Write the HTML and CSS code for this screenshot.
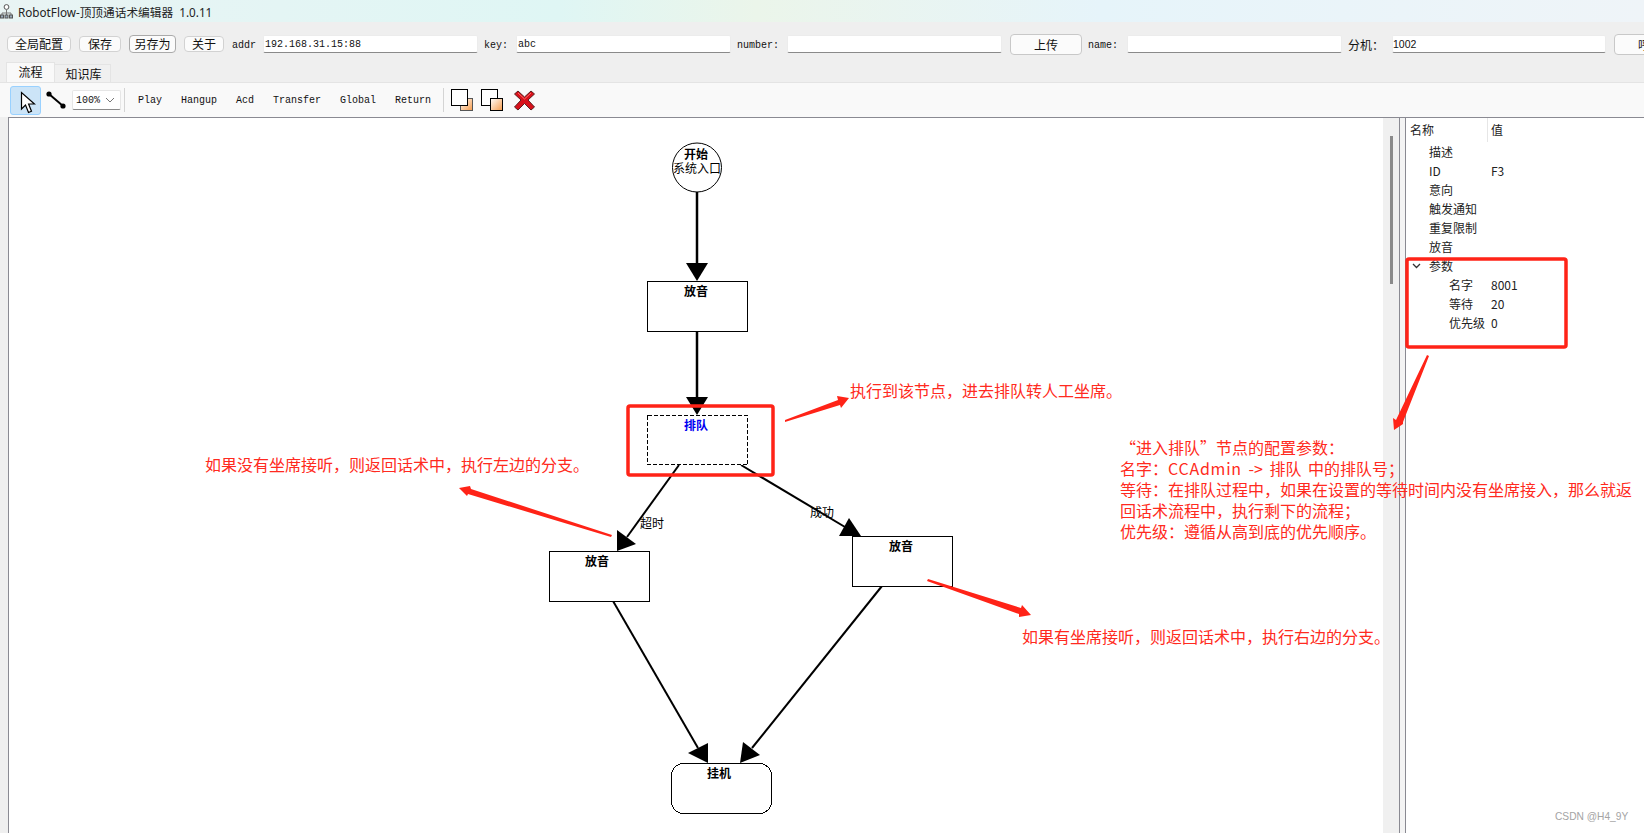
FILE: index.html
```html
<!DOCTYPE html>
<html lang="zh">
<head>
  <meta charset="UTF-8" />
  <title>RobotFlow-顶顶通话术编辑器 1.0.11</title>
  <link rel="stylesheet" href="styles.css">
</head>
<body>
  <div class="titlebar">
    <svg class="app-icon" width="13" height="15" viewBox="0 0 13 15">
      <circle cx="6.5" cy="3" r="2.4" fill="#fff" stroke="#555"/>
      <path d="M6.5 5.5V9M2 11V9H11V11M6.5 9V11" fill="none" stroke="#777"/>
      <rect x="0.5" y="11" width="3" height="3" fill="#9ab" stroke="#555"/>
      <rect x="5" y="11" width="3" height="3" fill="#9ab" stroke="#555"/>
      <rect x="9.5" y="11" width="3" height="3" fill="#9ab" stroke="#555"/>
    </svg>
    <span>RobotFlow-顶顶通话术编辑器&nbsp; 1.0.11</span>
  </div>

  <div class="topbar">
    <button class="btn w64">全局配置</button>
    <button class="btn w42">保存</button>
    <button class="btn btn-focus w47">另存为</button>
    <button class="btn w40">关于</button>
    <span class="lbl w31">addr</span>
    <input class="field" value="192.168.31.15:88">
    <span class="lbl w30">key:</span>
    <input class="field" value="abc">
    <span class="lbl w48">number:</span>
    <input class="field">
    <button class="btn btn-big">上传</button>
    <span class="lbl w37">name:</span>
    <input class="field">
    <span class="lbl-cn">分机：</span>
    <input class="field field-sans" value="1002">
    <button class="btn btn-big">呼叫</button>
  </div>

  <div class="tabs">
    <div class="tab active">流程</div>
    <div class="tab">知识库</div>
  </div>

  <div class="tools">
    <div class="tool-select">
      <svg width="16" height="23" viewBox="0 0 16 23">
        <path d="M1.5 1.5V18L5.5 14L8.5 21.5L11.5 20.2L8.6 13H14.5Z" fill="#fff" stroke="#000" stroke-width="1.2"/>
      </svg>
    </div>
    <svg class="tool-link" width="20" height="18" viewBox="0 0 20 18">
      <path d="M3 3L17 15" stroke="#000" stroke-width="2"/>
      <circle cx="3" cy="3" r="2.6"/>
      <circle cx="17" cy="15" r="2.6"/>
    </svg>
    <div class="combo">
      <span>100%</span>
      <svg width="10" height="6" viewBox="0 0 10 6"><path d="M1 1L5 5L9 1" fill="none" stroke="#777"/></svg>
    </div>
    <div class="sep"></div>
    <div class="tool-words">
      <span>Play</span>
      <span>Hangup</span>
      <span>Acd</span>
      <span>Transfer</span>
      <span>Global</span>
      <span>Return</span>
    </div>
    <div class="sep sep-two"></div>
    <svg class="layer-icon" width="22" height="22" viewBox="0 0 22 22">
      <defs>
        <linearGradient id="orange" x1="0" y1="0" x2="1" y2="1">
          <stop offset="0" stop-color="#fff"/>
          <stop offset="1" stop-color="#f59a4a"/>
        </linearGradient>
      </defs>
      <rect x="9.5" y="9.5" width="12" height="12" fill="url(#orange)" stroke="#555"/>
      <rect x="0.5" y="0.5" width="16" height="16" fill="#fff" stroke="#000"/>
    </svg>
    <svg class="layer-icon" width="22" height="22" viewBox="0 0 22 22">
      <rect x="0.5" y="0.5" width="16" height="16" fill="#fff" stroke="#000"/>
      <rect x="9.5" y="9.5" width="12" height="12" fill="url(#orange)" stroke="#000"/>
    </svg>
    <svg class="del-icon" width="21" height="22" viewBox="0 0 21 22">
      <path d="M4 2L10.5 8L17 2L20.5 5L14 11L20.5 18L17 21L10.5 14.500L4 21L0.500 18L7 11L0.500 5Z" fill="#d8101a" stroke="#5a2020"/>
      <path d="M4 4L10.500 10L17 4" fill="none" stroke="#ff6a6a"/>
    </svg>
  </div>

  <div class="main">
    <div class="canvas">
      <svg class="flow" width="1375" height="716" viewBox="8 117 1375 716">
        <g class="edges">
          <path class="thick" d="M697 192V265"/>
          <path class="thick" d="M697 332V399"/>
          <path d="M679 465L627 537"/>
          <path d="M741 465L845 527"/>
          <path d="M613 601L698 748"/>
          <path d="M882 586L752 748"/>
        </g>
        <polygon points="686,263 708,263 697,281"/>
        <polygon points="686,397 708,397 697,415"/>
        <polygon points="617,530 636,544 617,551"/>
        <polygon points="849,518 861,536 839,536"/>
        <polygon points="708,743 688,753 708,763"/>
        <polygon points="743,742 760,755 740,763"/>

        <circle class="node" cx="697" cy="167.500" r="24.500"/>
        <rect class="node" x="647.500" y="281.500" width="100" height="50"/>
        <rect class="node dashed" x="647.500" y="415.500" width="100" height="49"/>
        <rect class="node" x="549.500" y="551.500" width="100" height="50"/>
        <rect class="node" x="852.500" y="536.500" width="100" height="50"/>
        <rect class="node" x="671.500" y="763.500" width="100" height="50" rx="12"/>

        <text class="name" x="696" y="159">开始</text>
        <text class="sub" x="697" y="173">系统入口</text>
        <text class="name" x="696" y="296">放音</text>
        <text class="name picked" x="696" y="430">排队</text>
        <text class="name" x="597" y="566">放音</text>
        <text class="name" x="901" y="551">放音</text>
        <text class="name" x="719" y="778">挂机</text>
        <text class="sub" x="652" y="528">超时</text>
        <text class="sub" x="822" y="517">成功</text>
      </svg>
    </div>
    <div class="scrollbar"><div class="thumb"></div></div>
    <div class="splitter"></div>
    <div class="props">
      <div class="props-head">
        <div class="head-name">名称</div>
        <div class="head-val">值</div>
      </div>
      <div class="row"><span class="k">描述</span></div>
      <div class="row"><span class="k">ID</span><span>F3</span></div>
      <div class="row"><span class="k">意向</span></div>
      <div class="row"><span class="k">触发通知</span></div>
      <div class="row"><span class="k">重复限制</span></div>
      <div class="row"><span class="k">放音</span></div>
      <div class="row">
        <svg class="chev" width="9" height="6" viewBox="0 0 9 6"><path d="M1 1L4.500 4.500L8 1" fill="none" stroke="#333" stroke-width="1.300"/></svg>
        <span class="k">参数</span>
      </div>
      <div class="row sub-row"><span class="k">名字</span><span>8001</span></div>
      <div class="row sub-row"><span class="k">等待</span><span>20</span></div>
      <div class="row sub-row"><span class="k">优先级</span><span>0</span></div>
    </div>
  </div>

  <!-- 标注 -->
  <svg class="marks" width="1644" height="833" viewBox="0 0 1644 833">
    <rect x="628" y="406" width="145" height="69" rx="2"/>
    <rect x="1407" y="259" width="159" height="88" rx="2"/>
    <polygon points="785,420 785,422 840,405 841,408 849,398 837,396 838,400"/>
    <polygon points="612,535 611,537 468,494 467,496 459,488 470,486 471,489"/>
    <polygon points="928,579 927,581 1019,614 1019,617 1031,615 1022,605 1021,608"/>
    <polygon points="1427,355 1429,356 1403,422 1403,424 1394,430 1393,418 1396,420"/>
  </svg>
  <div class="note note-run">执行到该节点，进去排队转人工坐席。</div>
  <div class="note note-left">如果没有坐席接听，则返回话术中，执行左边的分支。</div>
  <div class="note note-right">如果有坐席接听，则返回话术中，执行右边的分支。</div>
  <div class="note note-params">
    <div>“进入排队”节点的配置参数：</div>
    <div class="wide-line">名字：<span class="latin">CCAdmin</span> -&gt; 排队 中的排队号；</div>
    <div>等待：在排队过程中，如果在设置的等待时间内没有坐席接入，那么就返</div>
    <div>回话术流程中，执行剩下的流程；</div>
    <div>优先级：遵循从高到底的优先顺序。</div>
  </div>
  <div class="watermark">CSDN @H4_9Y</div>
</body>
</html>
```

FILE: styles.css
```css
* {
  box-sizing: border-box;
}

html, body {
  margin: 0;
  height: 833px;
  overflow: hidden;
}

body {
  position: relative;
  background: #efefef;
  color: #111;
  font-family: "Noto Sans", "Noto Sans CJK SC", sans-serif;
  font-size: 12px;
}

.titlebar {
  height: 22px;
  display: flex;
  align-items: center;
  gap: 5px;
  color: #222;
  font-size: 11.700px;
  background: linear-gradient(90deg, #e9f4f4 0, #dff6f4 34%, #ebf5ea 46%, #e6f4fa 67%, #eff4f8 100%);
}

.app-icon {
  flex: none;
}

.topbar {
  height: 40px;
  padding: 4px 0 0 7px;
  display: flex;
  align-items: center;
  gap: 8px;
  white-space: nowrap;
}

.btn {
  flex: none;
  height: 16px;
  padding: 0;
  background: #fbfbfb;
  border: 1px solid #d2d2d2;
  border-radius: 4px;
  color: #111;
  font-family: "Noto Sans CJK SC", sans-serif;
  font-size: 12px;
  line-height: 14px;
}

.btn-focus {
  height: 18px;
  border-color: #aaa;
  line-height: 16px;
}

.btn-big {
  width: 72px;
  height: 21px;
  line-height: 19px;
  border-color: #c8c8c8;
}

.w64 { width: 64px; }
.w42 { width: 42px; }
.w47 { width: 47px; }
.w40 { width: 40px; }
.w31 { width: 23px; }
.w30 { width: 24px; margin-left: -2px; }
.w48 { width: 42px; margin-left: -2px; }
.w37 { width: 31px; margin-left: -2px; }

.lbl {
  flex: none;
  font-family: "Liberation Mono", monospace;
  font-size: 10px;
  position: relative;
  top: 1px;
}

.lbl-cn {
  flex: none;
  width: 36px;
  margin-left: -2px;
  font-family: "Noto Sans CJK SC", sans-serif;
  font-size: 12px;
}

.field {
  flex: none;
  width: 215px;
  height: 18px;
  padding: 0 1px;
  background: #fff;
  border: 1px solid #ececec;
  border-bottom-color: #8a8a8a;
  border-radius: 2px;
  outline: none;
  color: #111;
  font-family: "Liberation Mono", monospace;
  font-size: 10px;
}

.field-sans {
  width: 214px;
  padding: 0;
  font-family: "Liberation Sans", sans-serif;
  font-size: 10.500px;
}

.tabs {
  height: 20px;
  padding-left: 6px;
  display: flex;
  align-items: flex-end;
  font-family: "Noto Sans CJK SC", sans-serif;
}

.tab {
  width: 56px;
  height: 18px;
  line-height: 17px;
  padding-left: 2px;
  text-align: center;
  background: #f0f0f0;
  border: 1px solid #e4e4e4;
  border-bottom: none;
  border-left: none;
}

.tab.active {
  width: 49px;
  height: 20px;
  line-height: 18px;
  padding: 0;
  background: #f9f9f9;
  border-left: 1px solid #e4e4e4;
}

.tools {
  height: 35px;
  padding-left: 10px;
  display: flex;
  align-items: center;
  background: #f9f9f9;
  border-top: 1px solid #e4e4e4;
}

.tool-select {
  width: 31px;
  height: 29px;
  padding: 4px 0 0 9px;
  background: #cce4f7;
  border: 1px solid #99d1ff;
  border-radius: 3px;
}

.tool-select svg {
  display: block;
}

.tool-link {
  margin-left: 5px;
  flex: none;
}

.combo {
  width: 49px;
  height: 20px;
  margin-left: 6px;
  padding: 0 5px 0 3px;
  display: flex;
  align-items: center;
  justify-content: space-between;
  background: #fff;
  border: 1px solid #e6e6e6;
  border-bottom-color: #8a8a8a;
  border-radius: 2px;
  font-family: "Liberation Mono", monospace;
  font-size: 10px;
}

.sep {
  width: 1px;
  height: 24px;
  margin-left: 3px;
  background: #d4d4d4;
}

.sep-two {
  margin-left: 12px;
}

.tool-words {
  margin-left: 13px;
  display: flex;
  gap: 19px;
  font-family: "Liberation Mono", monospace;
  font-size: 10px;
}

.layer-icon {
  margin-left: 7px;
  flex: none;
}

.layer-icon + .layer-icon {
  margin-left: 8px;
}

.del-icon {
  margin-left: 11px;
  flex: none;
}

.main {
  height: 716px;
  padding-left: 8px;
  display: flex;
}

.canvas {
  width: 1375px;
  background: #fff;
  border-top: 1px solid #8a8a92;
  border-left: 1px solid #8a8a92;
  overflow: hidden;
}

.flow {
  display: block;
  margin: -1px 0 0 -1px;
}

.flow polygon {
  fill: #000;
}

.edges path {
  fill: none;
  stroke: #000;
  stroke-width: 2;
}

.edges .thick {
  stroke-width: 2.500;
}

.node {
  fill: #fff;
  stroke: #000;
  stroke-width: 1;
  shape-rendering: crispEdges;
}

circle.node {
  shape-rendering: auto;
}

.node.dashed {
  stroke-dasharray: 4 2;
}

.flow text {
  text-anchor: middle;
  font-family: "Noto Sans CJK SC", sans-serif;
  font-size: 12px;
  fill: #000;
}

.flow .name {
  font-weight: 700;
}

.flow .picked {
  fill: #0000f0;
}

.scrollbar {
  width: 17px;
  padding: 18px 0 0 7px;
  background: #f0f0f0;
  border-top: 1px solid #8a8a92;
  border-right: 1px solid #8a8a92;
}

.thumb {
  width: 3px;
  height: 148px;
  background: #8a8a8a;
}

.splitter {
  width: 5px;
  background: #f4f4f4;
  border-top: 1px solid #8a8a92;
}

.props {
  flex: 1;
  background: #fff;
  border-top: 1px solid #8a8a92;
  border-left: 1px solid #8a8a92;
  font-family: "Noto Sans CJK SC", sans-serif;
  color: #222;
}

.props-head {
  height: 24px;
  display: flex;
  line-height: 24px;
}

.head-name {
  width: 82px;
  padding-left: 4px;
  border-right: 1px solid #e6e6e6;
}

.head-val {
  padding-left: 3px;
}

.row {
  position: relative;
  height: 19px;
  padding-left: 23px;
  display: flex;
  align-items: center;
}

.k {
  width: 62px;
  white-space: nowrap;
}

.sub-row {
  padding-left: 43px;
}

.sub-row .k {
  width: 42px;
}

.chev {
  position: absolute;
  left: 6px;
  top: 7px;
}

.marks {
  position: absolute;
  left: 0;
  top: 0;
  pointer-events: none;
}

.marks rect {
  fill: none;
  stroke: #ff2317;
  stroke-width: 3.500;
}

.marks polygon {
  fill: #ff2317;
}

.note {
  position: absolute;
  color: #ff2a20;
  font-family: "Noto Sans CJK SC", sans-serif;
  font-size: 16px;
  line-height: 21px;
  white-space: nowrap;
}

.note-run {
  left: 850px;
  top: 380px;
}

.note-left {
  left: 205px;
  top: 454px;
}

.note-right {
  left: 1022px;
  top: 626px;
}

.note-params {
  left: 1120px;
  top: 437px;
}

.wide-line {
  word-spacing: 3px;
}

.latin {
  letter-spacing: 0.750px;
}

.watermark {
  position: absolute;
  left: 1555px;
  top: 811px;
  color: #a4a4a4;
  font-family: "Liberation Sans", sans-serif;
  font-size: 10.200px;
}
```
